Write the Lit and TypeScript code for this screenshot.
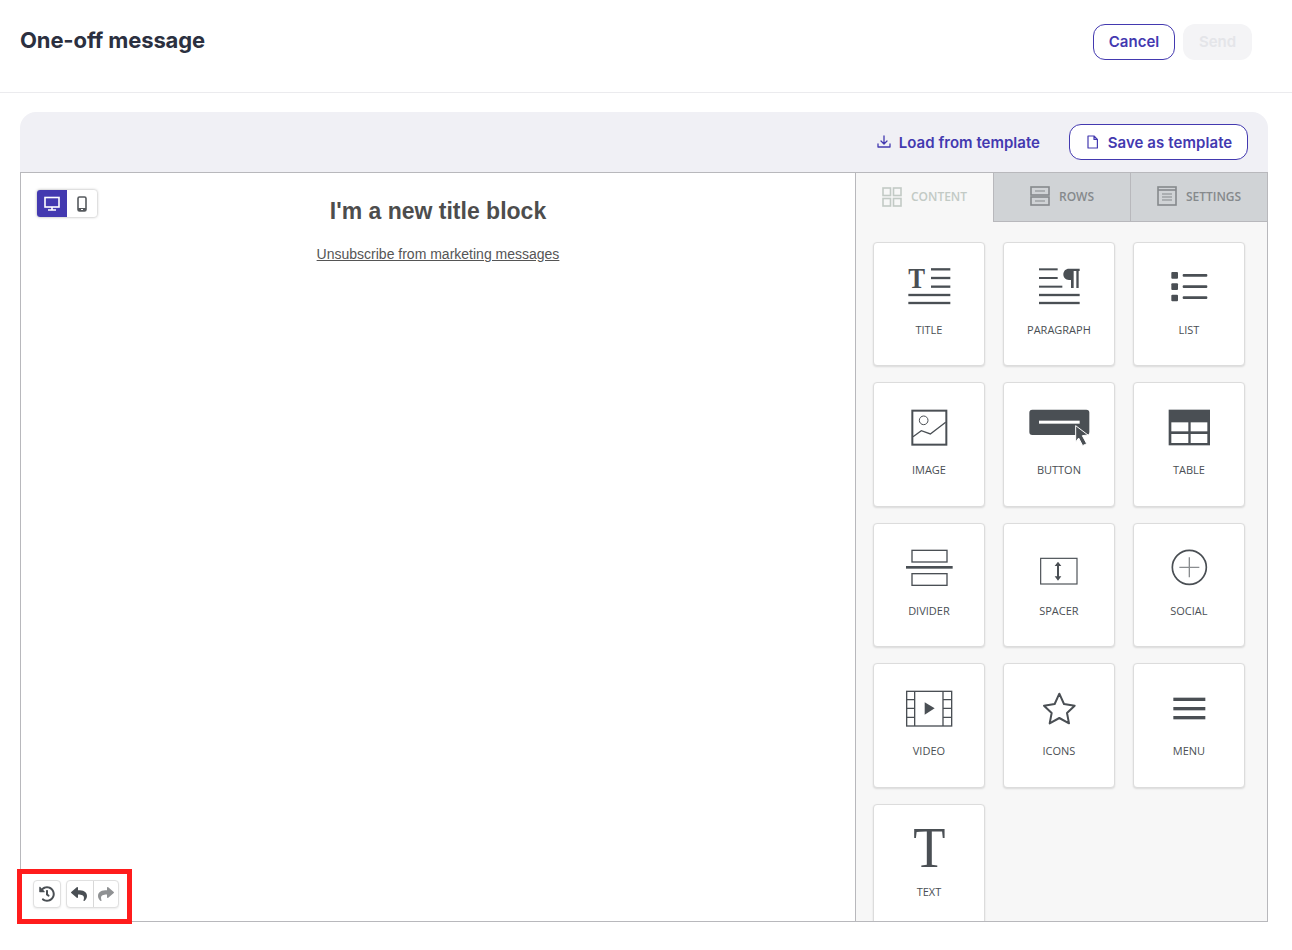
import { LitElement, html, css, svg } from "lit";
import { customElement } from "lit/decorators.js";

const D = "#4a4f54";
const hr = (x1: number, x2: number, y: number, h = 7) =>
  svg`<rect x=${x1} y=${y - h / 2} width=${x2 - x1} height=${h} fill=${D}></rect>`;

const tiles = [
  { label: "TITLE", vb: "38 22", g: svg`
    <text transform="translate(144 160) scale(.83 1)" font-family="Liberation Serif" font-weight="700" font-size="91" fill=${D}>T</text>
    ${hr(212, 270, 104)}${hr(212, 270, 130)}${hr(212, 270, 156)}${hr(144, 270, 181)}${hr(144, 270, 205)}` },
  { label: "PARAGRAPH", vb: "428 22", g: svg`
    ${hr(536, 592, 104, 6)}${hr(536, 592, 130, 6)}${hr(536, 606, 156, 6)}${hr(536, 658, 181)}${hr(536, 658, 205)}
    <path d="M626 102H658V109H655V160H648V109H640V160H632V136H626C616 136 609 129 609 119C609 109 616 102 626 102Z" fill=${D}></path>` },
  { label: "LIST", vb: "818 22", g: svg`
    <rect x="933" y="112" width="20" height="20" rx="3" fill=${D}></rect>
    <rect x="933" y="146" width="20" height="20" rx="3" fill=${D}></rect>
    <rect x="933" y="180" width="20" height="20" rx="3" fill=${D}></rect>
    <rect x="967" y="118" width="74" height="8" rx="3" fill=${D}></rect>
    <rect x="967" y="152" width="74" height="8" rx="3" fill=${D}></rect>
    <rect x="967" y="185" width="74" height="8" rx="3" fill=${D}></rect>` },
  { label: "IMAGE", vb: "38 22", g: svg`
    <rect x="156" y="105" width="102" height="102" fill="none" stroke=${D} stroke-width="6"></rect>
    <circle cx="190" cy="134" r="13" fill="none" stroke=${D} stroke-width="3"></circle>
    <path d="M158 183L183 165L210 175L256 140" fill="none" stroke=${D} stroke-width="4"></path>` },
  { label: "BUTTON", vb: "428 22", g: svg`
    <rect x="507" y="102" width="180" height="76" rx="9" fill=${D}></rect>
    <rect x="536" y="135" width="122" height="9" fill="#fff"></rect>
    <path d="M646 150L683 178L666 180L679 204L667 210L655 187L646 199Z" fill=${D} stroke="#fff" stroke-width="3"></path>` },
  { label: "TABLE", vb: "818 22", g: svg`
    <rect x="925" y="102" width="124" height="107" fill=${D}></rect>
    <rect x="933" y="140" width="51" height="27" fill="#fff"></rect>
    <rect x="991" y="140" width="50" height="27" fill="#fff"></rect>
    <rect x="933" y="175" width="51" height="27" fill="#fff"></rect>
    <rect x="991" y="175" width="50" height="27" fill="#fff"></rect>` },
  { label: "DIVIDER", vb: "38 25", g: svg`
    <rect x="155" y="107" width="105" height="35" fill="none" stroke=${D} stroke-width="4"></rect>
    ${hr(137, 277, 158, 8)}
    <rect x="155" y="177" width="105" height="35" fill="none" stroke=${D} stroke-width="4"></rect>` },
  { label: "SPACER", vb: "428 25", g: svg`
    <rect x="541" y="131" width="109" height="77" fill="none" stroke=${D} stroke-width="3.5"></rect>
    <rect x="590" y="148" width="6" height="42" fill=${D}></rect>
    <path d="M593 141L603 154H583ZM593 198L603 185H583Z" fill=${D}></path>` },
  { label: "SOCIAL", vb: "818 25", g: svg`
    <circle cx="987" cy="158" r="51" fill="none" stroke=${D} stroke-width="5"></circle>
    <path d="M957 158H1017M987 128V188" fill="none" stroke="#8a8d90" stroke-width="4"></path>` },
  { label: "VIDEO", vb: "38 25", g: svg`
    <rect x="139" y="107" width="135" height="104" fill="none" stroke=${D} stroke-width="4"></rect>
    <path d="M163 107V211M248 107V211M139 132H163M139 158H163M139 185H163M248 132H274M248 158H274M248 185H274" fill="none" stroke=${D} stroke-width="4"></path>
    <path d="M193 140L223 158L193 177Z" fill=${D}></path>` },
  { label: "ICONS", vb: "428 25", g: svg`
    <path d="M597 114L611 145L643 150L620 172L626 203L597 187L568 203L574 172L551 150L583 145Z" fill="none" stroke=${D} stroke-width="6" stroke-linejoin="round"></path>` },
  { label: "MENU", vb: "818 25", g: svg`
    <rect x="939" y="126" width="96" height="10" fill=${D}></rect>
    <rect x="939" y="154" width="96" height="10" fill=${D}></rect>
    <rect x="939" y="181" width="96" height="10" fill=${D}></rect>` },
  { label: "TEXT", vb: "67 28", g: svg`
    <text transform="translate(236 217) scale(.93 1)" text-anchor="middle" font-family="Liberation Serif" font-weight="400" font-size="170" fill=${D}>T</text>` },
];

const HISTORY = "M504 255.531c.253 136.64-111.18 248.372-247.82 248.468-59.015.042-113.223-20.53-155.822-54.911-11.077-8.94-11.905-25.541-1.839-35.607l11.267-11.267c8.609-8.609 22.353-9.551 31.891-1.984C173.062 425.135 212.781 440 256 440c101.705 0 184-82.311 184-184 0-101.705-82.311-184-184-184-48.814 0-93.149 18.969-126.068 49.932l50.754 50.754c10.08 10.08 2.941 27.314-11.313 27.314H24c-8.837 0-16-7.163-16-16V38.627c0-14.254 17.234-21.393 27.314-11.314l49.372 49.372C129.209 34.136 189.552 8 256 8c136.81 0 247.747 110.78 248 247.531zm-180.912 78.784l9.823-12.63c8.138-10.463 6.253-25.542-4.21-33.679L288 256.349V152c0-13.255-10.745-24-24-24h-16c-13.255 0-24 10.745-24 24v135.651l65.409 50.874c10.463 8.137 25.541 6.253 33.679-4.21z";
const REPLY = "M8.309 189.836L184.313 37.851C199.719 24.546 224 35.347 224 56.015v80.053c160.629 1.839 288 34.032 288 186.258 0 61.441-39.581 122.309-83.333 154.132-13.653 9.931-33.111-2.533-28.077-18.631 45.344-145.012-21.507-183.51-176.59-185.742V360c0 20.7-24.3 31.453-39.687 18.164l-176.004-152c-11.071-9.562-11.086-26.753 0-36.328z";

@customElement("app-root")
export class AppRoot extends LitElement {
  static styles = css`
    :host { display: block; position: relative; width: 1292px; height: 950px; background: #fff; overflow: hidden; font-family: "Inter", sans-serif; }
    * { box-sizing: border-box; }
    .header { height: 93px; border-bottom: 1px solid #ebebee; display: flex; align-items: flex-start; justify-content: space-between; padding: 24px 40px 0 20px; }
    h1 { margin: 0; font-size: 22px; line-height: 32px; font-weight: 700; color: #2b3040; letter-spacing: -0.13px; }
    .actions { display: flex; gap: 8px; }
    .btn { height: 36px; border-radius: 12px; font-size: 15px; font-weight: 600; display: flex; align-items: center; justify-content: center; }
    .actions .btn { padding-bottom: 2px; }
    .cancel { width: 82px; border: 1px solid #4339b0; color: #4339b0; background: #fff; }
    .send { width: 69px; background: #f4f4f6; color: #e4e5e9; }
    .panel { margin: 19px 24px 0 20px; }
    .bar { height: 60px; background: #f0f0f5; border-radius: 16px 16px 0 0; display: flex; align-items: center; justify-content: flex-end; padding-right: 20px; gap: 29px; }
    .load { display: flex; align-items: center; gap: 8px; color: #4339b0; font-size: 15px; font-weight: 600; letter-spacing: 0.02px; }
    .save { width: 179px; gap: 10px; padding-left: 2px; border: 1px solid #4339b0; color: #4339b0; background: #fff; letter-spacing: 0.08px; }
    .editor { height: 750px; border: 1px solid #b8b8bc; display: flex; overflow: hidden; }
    .canvas { flex: 1; position: relative; font-family: "Liberation Sans", sans-serif; color: #4d4d4d; text-align: center; padding-top: 24px; }
    .canvas h2 { margin: 0; font-size: 23px; line-height: 28px; font-weight: 700; }
    .canvas a { display: block; margin-top: 19px; font-size: 14px; line-height: 20px; color: #555; text-decoration: underline; }
    .side { width: 412px; border-left: 1px solid #b8b8bc; background: #f7f7f7; font-family: "Open Sans", sans-serif; }
    .tabs { display: flex; height: 49px; }
    .tab { flex: 1; display: flex; align-items: center; justify-content: center; gap: 9px; padding-bottom: 2px; font-size: 12px; font-weight: 600; background: #d0d3d6; color: #85898c; border-left: 1px solid #b8b8bc; border-bottom: 1px solid #b8b8bc; }
    .tab.on { flex: 0 0 137px; background: #f7f7f7; color: #c2cac5; border: 0; }
    .grid { display: grid; grid-template-columns: repeat(3, 112.7px); grid-auto-rows: 124.5px; gap: 16px 17.3px; padding: 19.7px 0 0 16.6px; }
    .tile { background: #fff; border: 1px solid #dcdcdc; border-radius: 4px; box-shadow: 0 1px 2px rgba(0,0,0,.12); font-size: 11px; font-weight: 500; line-height: 15px; color: #4a4f54; text-align: center; overflow: hidden; }
    .tile svg { display: block; width: 113px; height: 72px; margin: -0.4px 0 7.4px -1px; overflow: visible; }
    .tile span { display: block; }
    .device { position: absolute; left: 16px; top: 17px; display: flex; width: 60px; height: 27px; border-radius: 3px; background: #fff; box-shadow: 0 0 3px rgba(0,0,0,.35); overflow: hidden; }
    .device div { flex: 1; display: flex; align-items: center; justify-content: center; }
    .device .on { background: #4339b0; }
    .tools { position: absolute; left: 12px; bottom: 13px; display: flex; gap: 5px; }
    .tool { height: 28px; display: flex; background: #fff; border: 1px solid #e0e0e0; border-radius: 4px; box-shadow: 0 1px 2px rgba(0,0,0,.08); }
    .tool div { width: 26px; display: flex; align-items: center; justify-content: center; }
    .tool div + div { width: 25px; border-left: 1px solid #d8d8d8; }
    .mark { position: absolute; left: 17px; top: 869px; width: 115px; height: 55px; border: 5px solid #ff1c1c; pointer-events: none; }
    .flip { transform: scaleX(-1); }
    .undo { margin-left: -2px; }
  `;

  render() {
    return html`
      <div class="header">
        <h1>One-off message</h1>
        <div class="actions">
          <div class="btn cancel">Cancel</div>
          <div class="btn send">Send</div>
        </div>
      </div>
      <div class="panel">
        <div class="bar">
          <div class="load">
            <svg width="14" height="14" viewBox="0 0 14 14" fill="none" stroke="#4339b0" stroke-width="1.3" stroke-linecap="round" stroke-linejoin="round"><path d="M7 1V8.5M4 6L7 9L10 6M1 9V12H13V9"></path></svg>
            Load from template
          </div>
          <div class="btn save">
            <svg width="11" height="14" viewBox="0 0 11 14" fill="none" stroke="#4339b0" stroke-width="1.2" stroke-linejoin="round"><path d="M1 1H7L10.4 4.4V13H1ZM7 1V4.4H10.4"></path></svg>
            Save as template
          </div>
        </div>
        <div class="editor">
          <div class="canvas">
            <h2>I'm a new title block</h2>
            <a>Unsubscribe from marketing messages</a>
            <div class="device">
              <div class="on">
                <svg width="16" height="15" viewBox="0 0 16 15" fill="none" stroke="#fff" stroke-width="1.6"><rect x="1" y="1.5" width="14" height="9.5"></rect><path d="M8 11V14M4 14H12"></path></svg>
              </div>
              <div>
                <svg width="10" height="16" viewBox="0 0 10 16"><rect x="1" y="1" width="8" height="14" rx="1.5" fill="none" stroke="#55595d" stroke-width="1.6"></rect><rect x="1" y="12" width="8" height="3" fill="#55595d"></rect><rect x="4" y="13" width="2" height="1" fill="#fff"></rect></svg>
              </div>
            </div>
            <div class="tools">
              <div class="tool"><div><svg width="16" height="16" viewBox="0 0 512 512"><path fill="#4a4f54" d=${HISTORY}></path></svg></div></div>
              <div class="tool">
                <div><svg class="undo" width="16" height="16" viewBox="0 0 512 512"><path fill="#4a4f54" d=${REPLY}></path></svg></div>
                <div><svg class="flip" width="16" height="16" viewBox="0 0 512 512"><path fill="#8f9193" d=${REPLY}></path></svg></div>
              </div>
            </div>
          </div>
          <div class="side">
            <div class="tabs">
              <div class="tab on">
                <svg width="20" height="20" viewBox="0 0 20 20" fill="none" stroke="#c2cac5" stroke-width="1.6"><rect x="1" y="1" width="7.5" height="7.5"></rect><rect x="11.5" y="1" width="7.5" height="7.5"></rect><rect x="1" y="11.5" width="7.5" height="7.5"></rect><rect x="11.5" y="11.5" width="7.5" height="7.5"></rect></svg>
                CONTENT
              </div>
              <div class="tab">
                <svg width="20" height="20" viewBox="0 0 20 20" fill="none" stroke="#85898c" stroke-width="1.6"><rect x="1" y="1" width="18" height="8"></rect><rect x="1" y="11" width="18" height="8"></rect><path d="M5 5H15M5 15H15" stroke-width="1"></path></svg>
                ROWS
              </div>
              <div class="tab">
                <svg width="20" height="20" viewBox="0 0 20 20" fill="none" stroke="#85898c" stroke-width="1.6"><rect x="1" y="1" width="18" height="18"></rect><path d="M1 4H19" stroke-width="1.6"></path><path d="M5 8H15M5 11H15M5 14H15" stroke-width="1"></path></svg>
                SETTINGS
              </div>
            </div>
            <div class="grid">
              ${tiles.map((t) => html`
                <div class="tile">
                  <svg viewBox="${t.vb} 339 216">${t.g}</svg>
                  <span>${t.label}</span>
                </div>`)}
            </div>
          </div>
        </div>
      </div>
      <div class="mark"></div>
    `;
  }
}
